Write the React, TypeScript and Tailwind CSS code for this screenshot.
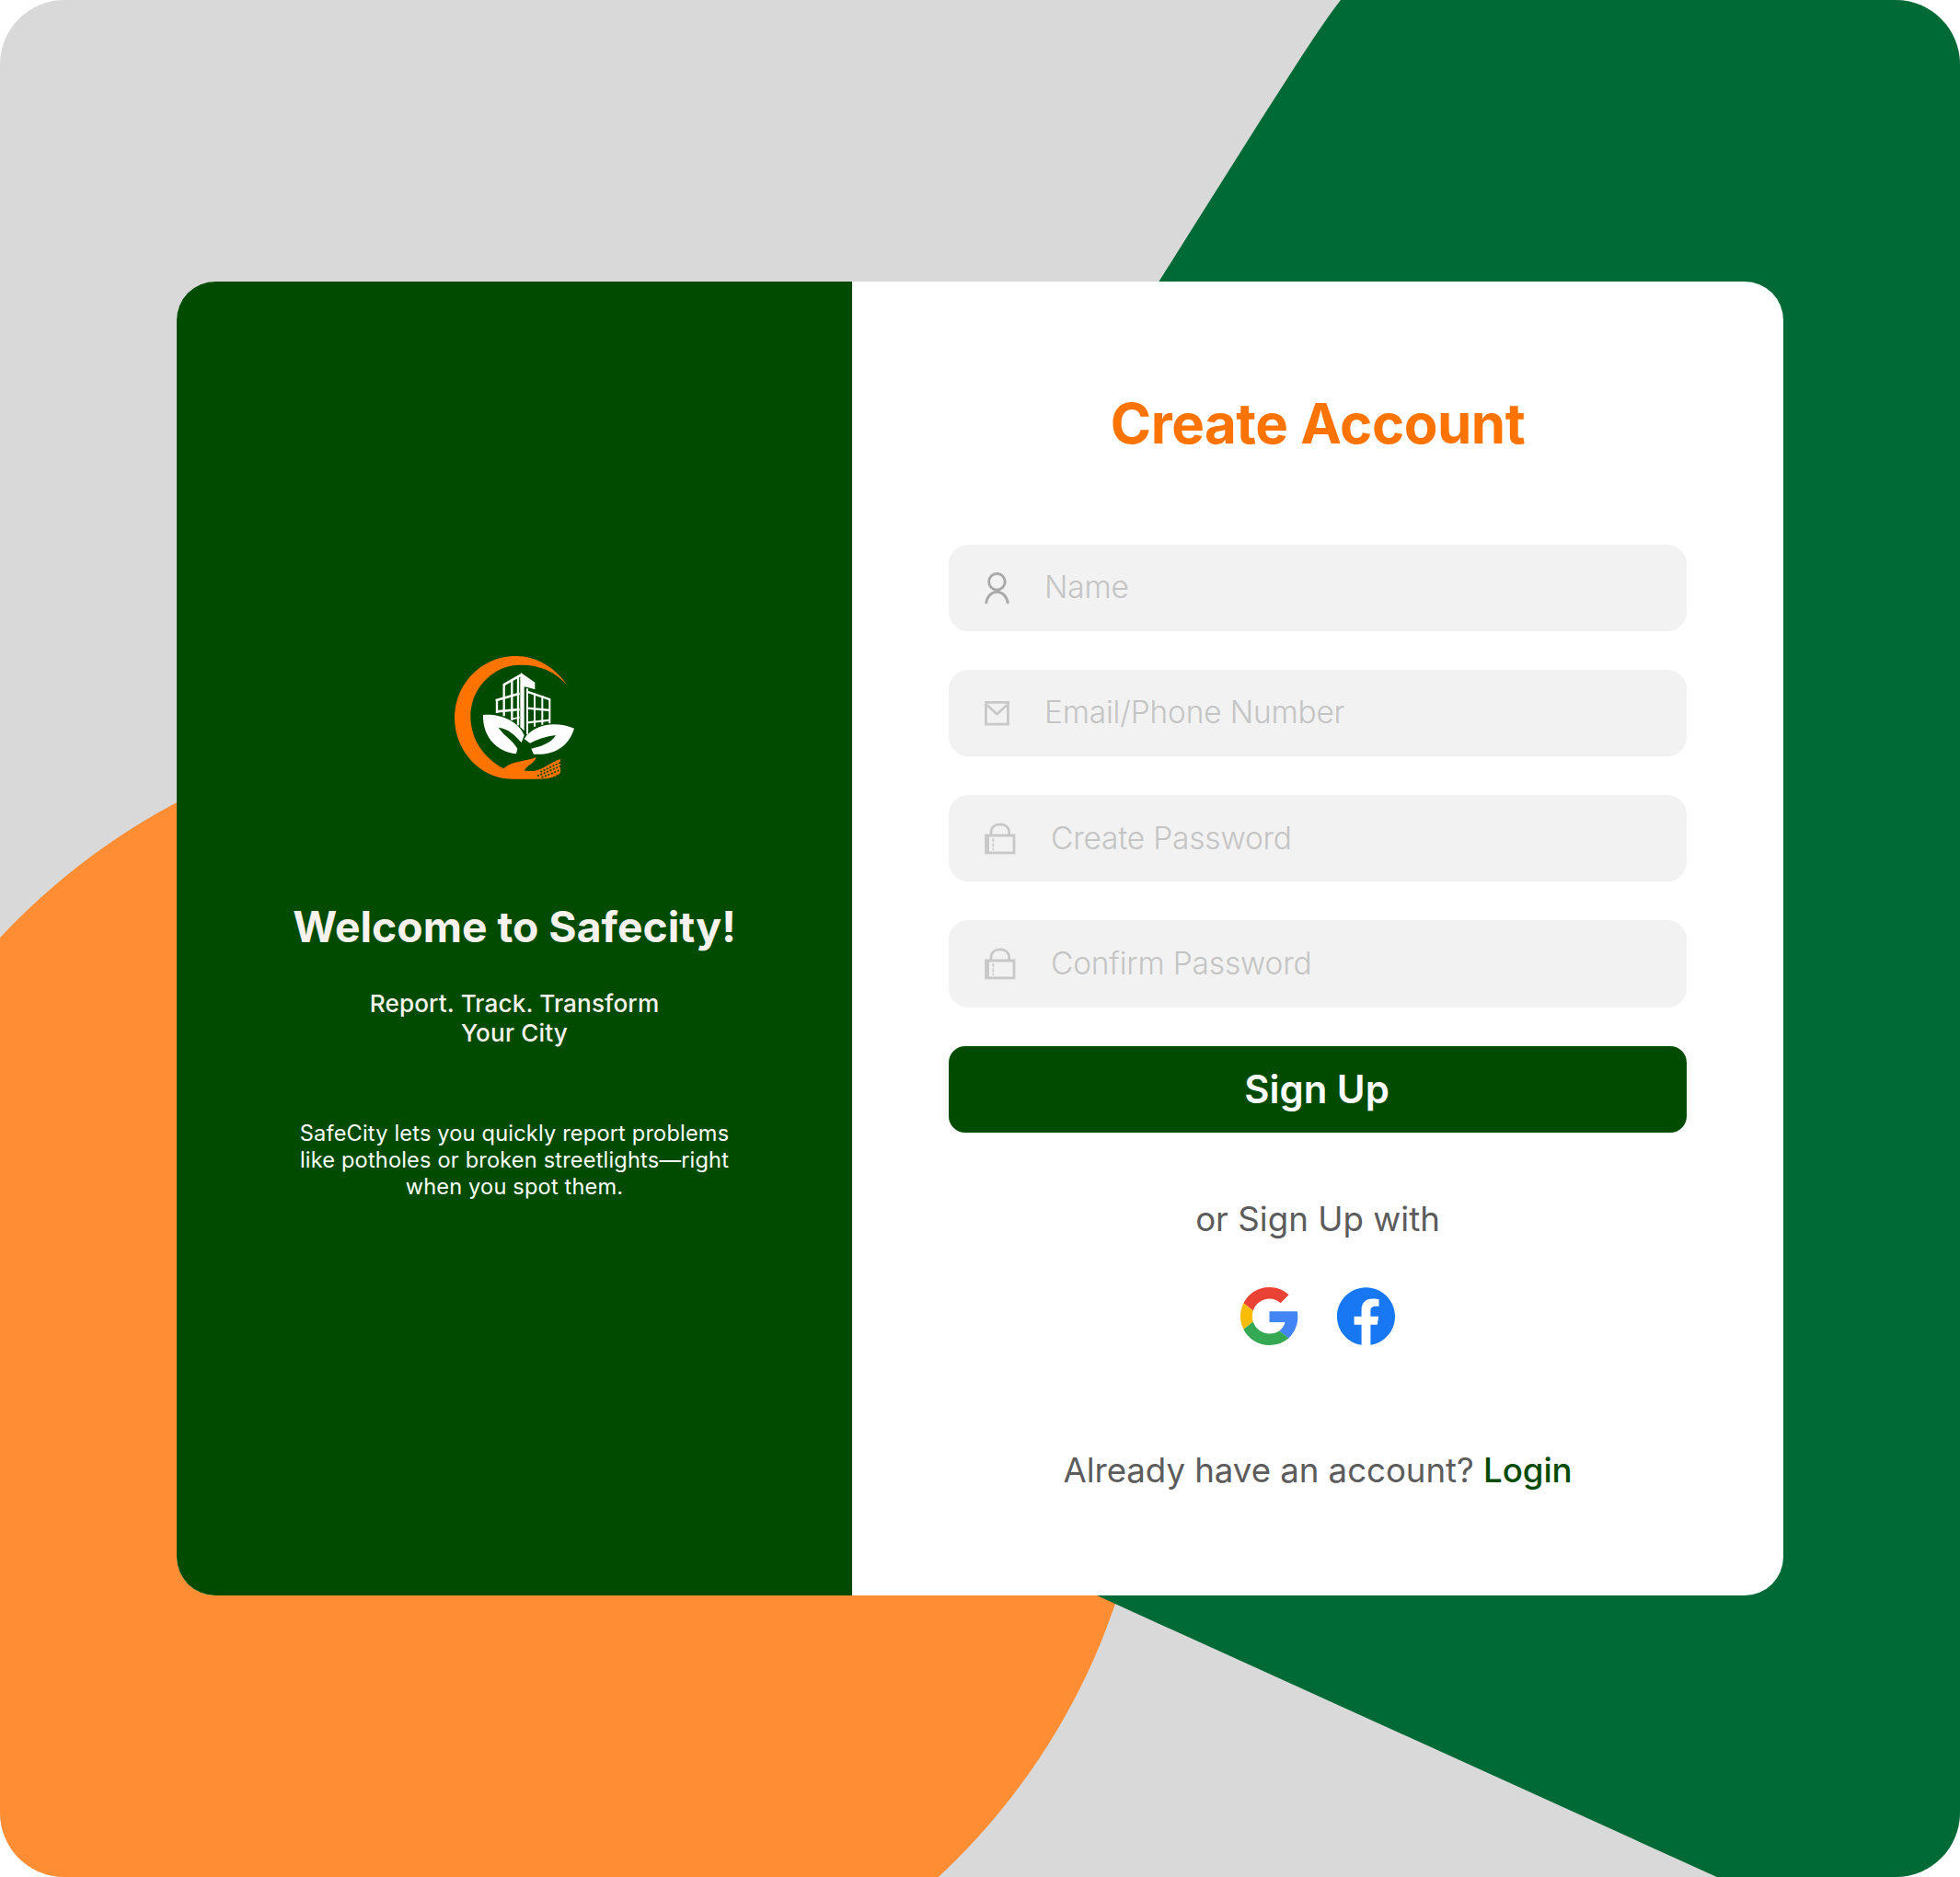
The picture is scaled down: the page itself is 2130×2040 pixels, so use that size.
import type { ReactNode } from 'react';

function Backdrop() {
  return (
    <svg className="absolute inset-0 h-full w-full" viewBox="0 0 2130 2040" aria-hidden="true">
      <circle cx="528.5" cy="1511" r="721.9" fill="#FF8D33" />
      <path d="M1457 0 Q1443 17.5 1414 62 L1370 130.5 L1260 305 L1000 900 L1193 1734.5 L1865.7 2040 H2130 V0 Z" fill="#006A37" />
    </svg>
  );
}

function SafecityLogo() {
  return (
    <svg className="h-[138px] w-[134px] shrink-0" viewBox="66 60 402 414" aria-label="Safecity">
      {/* crescent and open hand */}
      <path
        fill="#FF7300"
        d="M441 163 C400 103 340 66 272 66 C160 66 72 158 72 267 C72 375 155 467 262 467 H334 C365 467 398 467 417 448 V402 C388 411 365 434 330 441 L300 440 C303 424 334 416 338 396 C300 412 262 405 232 433 C165 398 124 335 124 262 C124 170 200 95 285 95 C345 93 400 115 441 163 Z"
      />
      <g stroke="#004B00" strokeWidth="5" strokeDasharray="6 5" fill="none">
        <path d="M352 444 L418 412" />
        <path d="M342 457 L420 424" />
        <path d="M356 462 L420 436" />
        <path d="M384 466 L420 450" />
      </g>
      {/* left tower */}
      <g stroke="#FFFFFF" fill="none">
        <path strokeWidth="8" d="M206 211 L284 188 M208 247 L284 240 M232 160 L288 128" />
        <path strokeWidth="7" d="M210 208 V252 M233 156 V262 M259 145 V275 M279 135 V292" />
        <path strokeWidth="5" d="M258 272 L284 266" />
      </g>
      <path fill="#FFFFFF" d="M288 120 L334 152 V175 L310 168 L299 166 V310 L286 298 V130 Z" />
      {/* right tower */}
      <g stroke="#FFFFFF" fill="none">
        <path strokeWidth="7" d="M308 182 L384 208 M308 236 L384 243 M308 283 L384 275" />
        <path strokeWidth="6" d="M309 172 V322 M333 188 V296 M358 196 V290 M382 206 V286" />
      </g>
      {/* leaves */}
      <path
        fill="#FFFFFF"
        d="M165 258 C222 254 280 278 299 325 L290 348 C270 325 246 302 215 299 C232 325 262 340 277 368 L273 385 C205 378 163 325 165 258 Z"
      />
      <path
        fill="#FFFFFF"
        d="M462 302 C448 348 410 392 330 386 L322 368 C350 362 388 350 402 324 C370 328 342 338 318 350 L299 336 C330 288 400 276 462 302 Z"
      />
    </svg>
  );
}

function UserIcon() {
  return (
    <svg className="h-[36px] w-[27px]" viewBox="0 0 27 36" fill="none" stroke="#A9A9A9" strokeWidth="2.9">
      <circle cx="13.4" cy="11.3" r="8.8" />
      <path d="M1.5 35 C2.4 27.5 7 22.4 13.4 22.4 S24.4 27.5 25.4 35" />
    </svg>
  );
}

function MailIcon() {
  return (
    <svg className="h-[27px] w-[27px]" viewBox="0 0 27 27" fill="none" stroke="#C8C8C8" strokeWidth="2.8">
      <path d="M1.4 1.4 H25.4 V25.2 H1.4 Z" />
      <path d="M3 4.5 L13.4 14.2 L24 4.5" />
    </svg>
  );
}

function LockIcon() {
  return (
    <svg className="h-[35px] w-[34px]" viewBox="0 0 34 35" fill="none" stroke="#C8C8C8" strokeWidth="2.8">
      <path d="M1.5 14 H32 V32.8 H1.5 Z" />
      <path d="M7 13.5 V11 C7 5 11 1.9 16.9 1.9 S26.6 5 26.6 11 V13.5" />
      <path d="M3.6 14 V32.8" />
      <path d="M9.3 17 V30" strokeWidth="1.6" strokeDasharray="4 1.5" />
    </svg>
  );
}

function GoogleIcon() {
  return (
    <svg className="size-[63px]" viewBox="0 0 48 48" aria-label="Google">
      <path fill="#EA4335" d="M24 9.5c3.54 0 6.71 1.22 9.21 3.6l6.85-6.85C35.9 2.38 30.47 0 24 0 14.62 0 6.51 5.38 2.56 13.22l7.98 6.19C12.43 13.72 17.74 9.5 24 9.5z" />
      <path fill="#4285F4" d="M47.5 24.55c0-1.57-.15-3.09-.38-4.55H24v9.02h12.94c-.58 2.96-2.26 5.48-4.78 7.18l7.73 6c4.51-4.18 7.61-10.36 7.61-17.65z" />
      <path fill="#FBBC05" d="M10.53 28.59c-.48-1.45-.76-2.99-.76-4.59s.27-3.14.76-4.59l-7.98-6.19C.92 16.46 0 20.12 0 24c0 3.88.92 7.54 2.56 10.78l7.97-6.19z" />
      <path fill="#34A853" d="M24 48c6.48 0 11.93-2.13 15.89-5.81l-7.73-6c-2.15 1.45-4.92 2.3-8.16 2.3-6.26 0-11.57-4.22-13.47-9.91l-7.98 6.19C6.51 42.62 14.62 48 24 48z" />
    </svg>
  );
}

function FacebookIcon() {
  return (
    <svg className="size-[63px]" viewBox="0 0 24 24" aria-label="Facebook">
      <path fill="#1877F2" d="M24 12.073c0-6.627-5.373-12-12-12s-12 5.373-12 12c0 5.99 4.388 10.954 10.125 11.854v-8.385H7.078v-3.47h3.047V9.43c0-3.007 1.792-4.669 4.533-4.669 1.312 0 2.686.235 2.686.235v2.953H15.83c-1.491 0-1.956.925-1.956 1.874v2.25h3.328l-.532 3.47h-2.796v8.385C19.612 23.027 24 18.062 24 12.073z" />
    </svg>
  );
}

function Field({ icon, label }: { icon: ReactNode; label: string }) {
  return (
    <label className="flex h-[94.3px] items-center gap-[38px] rounded-[21px] bg-[#F2F2F2] pl-[39px]">
      {icon}
      <span className="text-[33.5px] leading-none font-light tracking-[-0.2px] text-[#C4C4C4]">{label}</span>
    </label>
  );
}

export default function App() {
  return (
    <div className="h-[2040px] w-[2130px] bg-white font-['Inter',sans-serif]">
      <main className="relative flex h-full w-full items-center justify-center overflow-hidden rounded-[70px] bg-[#D9D9D9]">
        <Backdrop />
        <div className="relative flex h-[1428.8px] w-[1746px] overflow-hidden rounded-[42px] bg-white">
          <section className="flex w-[734px] shrink-0 flex-col items-center bg-[#004B00] pt-[405px] text-center text-[#F8F2EE]">
            <SafecityLogo />
            <h1 className="mt-[130.5px] text-[46.3px] leading-[56px] font-bold">Welcome to Safecity!</h1>
            <p className="mt-[40px] text-[26.2px] leading-[31.4px] font-medium tracking-[0.1px]">
              Report. Track. Transform
              <br />
              Your City
            </p>
            <p className="mt-[79px] text-[23.6px] leading-[29px] tracking-[0.17px] whitespace-nowrap text-white">
              SafeCity lets you quickly report problems
              <br />
              like potholes or broken streetlights—right
              <br />
              when you spot them.
            </p>
          </section>

          <section className="flex grow flex-col items-center px-[105px] pt-[118px]">
            <h2 className="text-[60px] leading-[72px] font-bold tracking-[-0.5px] text-[#FF7300]">Create Account</h2>
            <form className="mt-[96px] flex w-full flex-col gap-[42px]">
              <Field icon={<UserIcon />} label="Name" />
              <Field icon={<MailIcon />} label="Email/Phone Number" />
              <Field icon={<LockIcon />} label="Create Password" />
              <Field icon={<LockIcon />} label="Confirm Password" />
              <button type="button" className="h-[94.3px] rounded-[18px] bg-[#004B00] pr-[2px] text-[41.9px] leading-none font-semibold text-white">
                Sign Up
              </button>
            </form>
            <p className="mt-[72px] text-[36.7px] leading-[44px] text-[#5C5C5C]">or Sign Up with</p>
            <div className="mt-[52px] flex gap-[42px]">
              <GoogleIcon />
              <FacebookIcon />
            </div>
            <p className="mt-[114px] text-[36.7px] leading-[44px] tracking-[-0.07px] text-[#5C5C5C]">
              Already have an account? <span className="font-medium text-[#004B00]">Login</span>
            </p>
          </section>
        </div>
      </main>
    </div>
  );
}
